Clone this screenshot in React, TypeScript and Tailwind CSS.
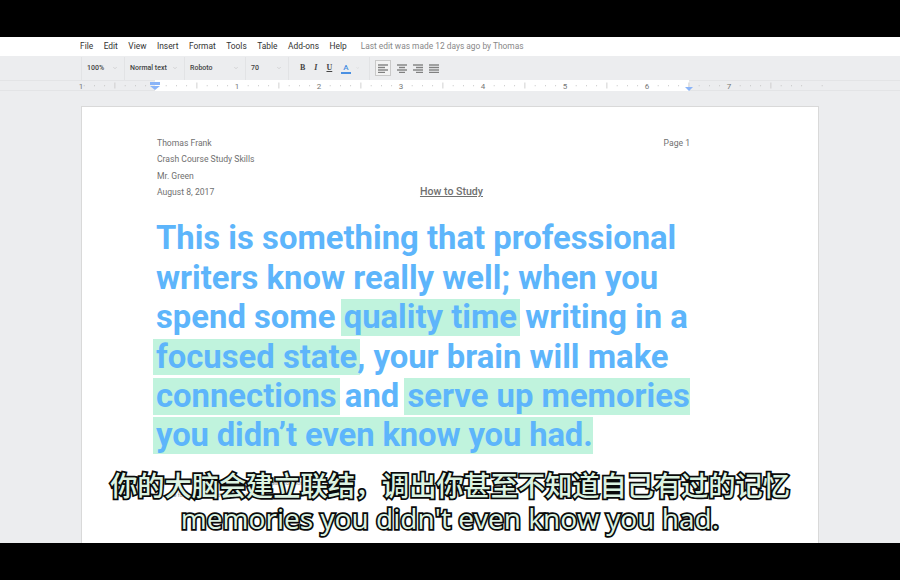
import React from "react";
import { ChevronDown } from "lucide-react";

const menus = ["File", "Edit", "View", "Insert", "Format", "Tools", "Table", "Add-ons", "Help"];

function Drop({ label, w }: { label: string; w: string }) {
  return (
    <div className={`flex items-center justify-between pl-[5px] pr-[6px] border-r border-[#e2e3e5] h-full ${w}`}>
      <span className="text-[7px] font-medium text-[#444]">{label}</span>
      <ChevronDown size={6} strokeWidth={2} className="text-[#bbb]" />
    </div>
  );
}

function Align({ widths, anchor = "left" }: { widths: number[]; anchor?: "left" | "center" | "right" }) {
  return (
    <svg width="10" height="9" viewBox="0 0 10 9">
      {widths.map((w, i) => (
        <rect
          key={i}
          x={anchor === "left" ? 0 : anchor === "right" ? 10 - w : (10 - w) / 2}
          y={i * 2.5 + 0.3}
          width={w}
          height="1.4"
          fill="#808080"
        />
      ))}
    </svg>
  );
}

function Ruler() {
  const nums: [string, number][] = [["1", 81], ["1", 237], ["2", 319], ["3", 401], ["4", 483], ["5", 565], ["6", 647], ["7", 729]];
  const ticks: React.ReactNode[] = [];
  for (let i = 0; i < 78; i++) {
    const x = 73.5 + i * 10.25;
    if (x > 825) break;
    const half = i % 8 === 4;
    const whole = i % 8 === 0;
    if (whole) continue;
    ticks.push(<rect key={i} x={x} y={half ? 2.5 : 5} width="0.8" height={half ? 6 : 1.3} fill="#c6c6c6" />);
  }
  return (
    <svg width="900" height="11" viewBox="0 0 900 11" className="block">
      <rect x="155" y="0" width="534" height="11" fill="#fff" />
      {ticks}
      {nums.map(([n, x], i) => (
        <text key={i} x={x} y="8.5" fontSize="8" fill="#777" textAnchor="middle" fontFamily="Roboto">{n}</text>
      ))}
      <rect x="150" y="2" width="10" height="3" fill="#8ab4f8" />
      <polygon points="150,6 160,6 155,10" fill="#8ab4f8" />
      <polygon points="685,7 693,7 689,11" fill="#8ab4f8" />
    </svg>
  );
}

function Hl({ children, tight = false }: { children: React.ReactNode; tight?: boolean }) {
  return (
    <span className={`inline-block bg-[#c0f3dd] pl-[3px] -ml-[3px] leading-[36.5px] ${tight ? "pr-0 mr-0" : "pr-[3px] -mr-[3px]"}`}>
      {children}
    </span>
  );
}

export default function App() {
  return (
    <div className="w-[900px] h-[580px] bg-black flex flex-col overflow-hidden relative font-['Roboto',sans-serif]">
      <div className="h-[37px] shrink-0" />
      <div className="h-[506px] flex flex-col bg-[#ecedef] overflow-hidden">
        <div className="h-[19px] shrink-0 bg-white flex items-center pl-[80px] text-[8.4px] text-[#333]">
          <div className="flex gap-[10.5px]">
            {menus.map((m) => (
              <span key={m}>{m}</span>
            ))}
          </div>
          <span className="ml-[14px] text-[#888]">Last edit was made 12 days ago by Thomas</span>
        </div>
        <div className="h-[24px] shrink-0 flex items-center pl-[81px] text-[#444]">
          <div className="flex items-center h-[23px] border-l border-[#e2e3e5]">
            <Drop label="100%" w="w-[43px]" />
            <Drop label="Normal text" w="w-[60px]" />
            <Drop label="Roboto" w="w-[61px]" />
            <Drop label="70" w="w-[43px]" />
          </div>
          <div className="flex items-center gap-[9px] h-[23px] pl-[11px] pr-[10px] border-r border-[#e2e3e5] text-[8px] font-bold w-[81px] font-['Liberation_Serif',serif]">
            <span>B</span>
            <span className="italic">I</span>
            <span className="underline">U</span>
            <span className="text-[#4a90e2] font-['Roboto',sans-serif] border-b-2 border-[#4a90e2] leading-[9px] px-[2px] font-medium">A</span>
            <ChevronDown size={6} className="text-[#bbb] -ml-[4px]" />
          </div>
          <div className="flex items-center ml-[5px] gap-[6px]">
            <div className="w-[16px] h-[16px] border border-[#c9c9c9] bg-[#f2f2f2] flex items-center justify-center">
              <Align widths={[10, 7, 10, 7]} />
            </div>
            <Align widths={[10, 6, 10, 6]} anchor="center" />
            <Align widths={[10, 7, 10, 7]} anchor="right" />
            <Align widths={[10, 10, 10, 10]} />
          </div>
        </div>
        <div className="h-[11px] shrink-0 border-y border-[#e3e4e6]">
          <div className="-mt-px"><Ruler /></div>
        </div>
        <div className="flex-1 pl-[81px] pt-[15px]">
          <div className="w-[738px] h-[500px] bg-white border border-[#d9d9d9] pl-[75px] pr-[128px] pt-[28px] relative">
            <div className="flex justify-between text-[8.6px] text-[#707070] leading-[16.35px]">
              <div>
                <div>Thomas Frank</div>
                <div>Crash Course Study Skills</div>
                <div>Mr. Green</div>
                <div>August 8, 2017</div>
              </div>
              <div>Page 1</div>
            </div>
            <div className="text-center -mt-[16px] text-[10.6px] font-medium text-[#707070] underline leading-[15px] pl-[56px]">How to Study</div>
            <div className="mt-[20px] -ml-[1px] text-[32.8px] font-bold text-[#5db5fb] leading-[39.4px] whitespace-nowrap">
              <div>This is something that professional</div>
              <div>writers know really well; when you</div>
              <div>spend some <Hl>quality time</Hl> writing in a</div>
              <div><Hl>focused state</Hl>, your brain will make</div>
              <div><Hl>connections</Hl> and <Hl tight>serve up memories</Hl></div>
              <div className="tracking-[-0.13px]"><Hl tight>you didn’t even know you had.</Hl></div>
            </div>
            <div className="mt-[21px] pl-[10px] text-[5.6px] text-[#999] leading-[12px] whitespace-nowrap">
              <div>There are some sources worth noting in these “footnotes”, which</div>
              <div>Use footnotes as text directly related to the content above, not for noticing.</div>
            </div>
          </div>
        </div>
      </div>
      <div className="absolute left-0 right-0 top-[464px] text-center text-[#dcf3e2] font-medium [-webkit-text-stroke:3.5px_#0a0a0a] [paint-order:stroke_fill]">
        <div className="text-[27.2px] leading-[40px] font-['Noto_Sans_CJK_SC',sans-serif]">你的大脑会建立联结，调出你甚至不知道自己有过的记忆</div>
        <div className="text-[28.1px] leading-[36px] -mt-[4px] font-['Open_Sans','Noto_Sans',sans-serif]">memories you didn't even know you had.</div>
      </div>
    </div>
  );
}
